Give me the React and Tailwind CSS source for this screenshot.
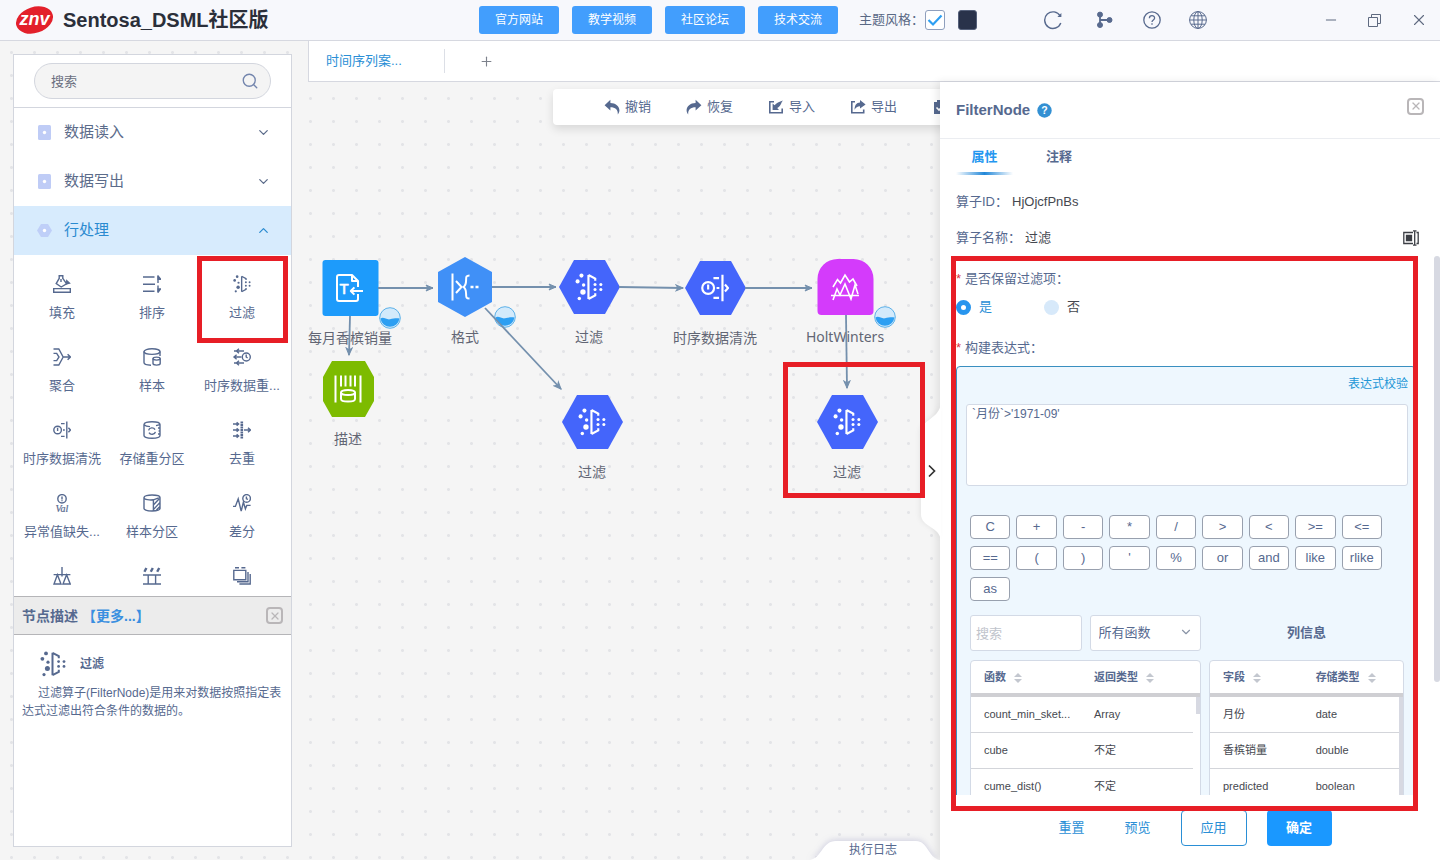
import React from 'react'
import { Minus, X, ChevronDown, ChevronUp, Plus, Search } from 'lucide-react'

const FilterIcon = ({ className }) => (
    <svg className={className} viewBox="0 0 26 26" fill="none" stroke="currentColor" strokeWidth="2">
        <path d="M12.5 1.8v22.4M12.5 1.8l6.3 3.4v2M12.5 24.2l6.3-3.4v-2" />
        <g fill="currentColor" stroke="none">
            <circle cx="6" cy="2.4" r="1.9" />
            <circle cx="2.4" cy="7.8" r="1.9" />
            <circle cx="8" cy="11.2" r="1.6" />
            <circle cx="7.4" cy="17.6" r="2.5" />
            <circle cx="4" cy="23.6" r="1.6" />
            <circle cx="18.6" cy="10.6" r="1.4" />
            <circle cx="18.6" cy="15.4" r="1.4" />
            <circle cx="24" cy="10.6" r="1.4" />
            <circle cx="24" cy="15.4" r="1.4" />
        </g>
    </svg>
)

// 18x18 line icons of the operator list
const Line = ({ children, className = 'size-[18px]' }) => (
    <svg className={className} viewBox="0 0 18 18" fill="none" stroke="currentColor" strokeWidth="1.4">
        {children}
    </svg>
)

const FillIcon = () => (
    <Line>
        <path d="M.7 13.6h16.6v3.7H.7zM6.2 4V.8h3.6V4M6.2 3.4L3.2 8.6l5 3.4 5.4-3.2-3.8-5.4" />
        <path d="M8 4v3M13.6 8.8l2.8-.6-2.6-2.4z" fill="currentColor" />
    </Line>
)

const SortIcon = () => (
    <Line>
        <path d="M0 2h11.5M0 9.2h12M0 16.3h11.5M15 1v7M15 10.5V17" />
        <path d="M15.2 1.2l2.4 3h-2.4zM15.2 17l2.4-3h-2.4z" fill="currentColor" />
    </Line>
)

const MergeIcon = () => (
    <Line>
        <path d="M.5 1h5.3l4.4 8h7.3M.5 5.4h3.2L6 9l-2.3 3.6H.5M.5 17h5.3l4.4-8M14.6 6.2L17.4 9l-2.8 2.8" />
    </Line>
)

const SampleIcon = () => (
    <Line>
        <ellipse cx="9" cy="3.6" rx="8" ry="2.8" />
        <path d="M1 3.6v11C1 16 4 17.2 8 17.2M17 3.6V8" />
        <ellipse cx="13.6" cy="10.6" rx="3.6" ry="1.5" />
        <path d="M10 10.6v5c0 2 7.2 2 7.2 0v-5" />
    </Line>
)

const ResampleIcon = () => (
    <Line>
        <circle cx="13.3" cy="9" r="4" />
        <path d="M13.2 6.5V9l1.4 1M1 3h10M.5 9h8M1 15h10M6 .8L3.4 3 6 5.2M3.6 6.8L1 9l2.6 2.2M6 12.8L3.4 15 6 17.2" />
    </Line>
)

const CleanIcon = ({ className }) => (
    <Line className={className}>
        <circle cx="4.6" cy="9" r="3.8" />
        <path d="M4.6 6.8V10M13.8.5v17M8 2.6h3.6M8 15.4h3.6M10 9h1.8M15.4 6.8L17.4 9l-2 2.2" />
    </Line>
)

const RepartitionIcon = () => (
    <Line>
        <path d="M1 3.4C1-.2 17-.2 17 3.4v11.2c0 3.6-16 3.6-16 0zM1 3.6c1.4 1.6 3.6 2 6 2M13 4.6l4-1M15 7h1.8M15.6 10H17M15 13h1.8" />
        <path d="M5.6 9.4c.6-3 5-3.4 6.4-.8M12.4 10.8c-.6 3-5 3.4-6.4.8" />
    </Line>
)

const DistinctIcon = () => (
    <Line>
        <path d="M0 3h5.4M0 9h5.4M0 15h5.4M3.6 1.4L5.6 3l-2 1.6M3.6 7.4L5.6 9l-2 1.6M3.6 13.4l2 1.6-2 1.6M11 9h6M15 6.8L17.4 9 15 11.2" />
        <path d="M8.8.4v17.2" strokeWidth="2.6" strokeDasharray="2 .5" />
    </Line>
)

const ValIcon = () => (
    <Line>
        <circle cx="9" cy="4.8" r="4.2" />
        <path d="M9 2.4v3M9 6.2v1" />
        <text x="9" y="17.6" textAnchor="middle" fontSize="10" fontStyle="italic" fontFamily="Liberation Serif, serif" fill="currentColor" strokeWidth=".2">Val</text>
    </Line>
)

const SplitIcon = () => (
    <Line>
        <path d="M1 3.4C1 .2 17 .2 17 3.4v11.2c0 3.2-16 3.2-16 0zM1 3.4c0 2.4 6 2.8 9.4 2.4M10.4 5.8L17 3.4M10.4 5.8V17M10.4 11l5.6-6M10.4 15.6L17 8.4M13.4 16l3.6-3.6" />
    </Line>
)

const DiffIcon = () => (
    <Line>
        <circle cx="13.6" cy="4.4" r="3.8" />
        <path d="M13.4 2.4v2.4l1.6.6M0 12.4h2.4l2.8-7.6 3 12.4 2.2-9 2 6.6 1.4-3.4h3.8" />
    </Line>
)

const BalanceIcon = () => (
    <Line>
        <path d="M9 0v9.4M.6 7.6h16.8M4.4 7.8L1 17h7zM13.6 7.8L10 17h7.2z" />
    </Line>
)

const GroupIcon = () => (
    <Line>
        <path d="M0 8h18M0 17h18M5.2 8v9M12.6 8v9" />
        <path d="M1.4 4.8L3.4 1M7.8 4.8l2-3.8M14.2 4.8l2-3.8" strokeWidth="2.4" />
    </Line>
)

const StackIcon = () => (
    <Line>
        <path d="M.8 3.4h12v9.4H.8zM15 5v9.8H4M17.2 7v10H6.4M2 .8h4M8.4.8h4" />
    </Line>
)

const FileInIcon = ({ className }) => (
    <svg className={className} viewBox="0 0 28 28" fill="none" stroke="currentColor" strokeWidth="2" strokeLinejoin="round">
        <path d="M22 20v5a2 2 0 0 1-2 2H3a2 2 0 0 1-2-2V3a2 2 0 0 1 2-2h13l6 6v6M16 1v6h6" />
        <path d="M27 17H15M18.4 13.4L14.8 17l3.6 3.6" />
        <text x="8" y="20" textAnchor="middle" fontSize="15" fontFamily="Liberation Sans, sans-serif" fill="currentColor" strokeWidth=".6">T</text>
    </svg>
)

const FormatIcon = ({ className }) => (
    <svg className={className} viewBox="0 0 28 28" fill="none" stroke="currentColor" strokeWidth="2">
        <path d="M1.5.5v27M5 8l5.5 6L5 20M18.5 2.5c-3.4 0-3.4 1.4-3.4 4.5 0 4-.6 5.6-2.6 7 2 1.4 2.6 3 2.6 7 0 3.1 0 4.5 3.4 4.5" />
        <path d="M19.5 14h3M24.5 14h3" strokeWidth="2.6" />
    </svg>
)

const DescribeIcon = ({ className }) => (
    <svg className={className} viewBox="0 0 28 28" fill="none" stroke="currentColor" strokeWidth="2">
        <path d="M1.5.5v27M26.5.5v27M7 .5v11M11.5.5v11M16.500.5v11M21 .5v11" />
        <ellipse cx="14" cy="17.5" rx="7" ry="2.6" />
        <path d="M7 17.5V24c0 3.4 14 3.4 14 0v-6.5" />
    </svg>
)

const HoltIcon = ({ className }) => (
    <svg className={className} viewBox="0 0 28 28" fill="none" stroke="currentColor" strokeWidth="1.6">
        <path d="M2 14l4.500-7.500 3 3.500L14 2l4.500 7 3.500-3 4 7" />
        <path d="M2 27l4-11 3 6 5-11 6 15 4-14 3 9M0 22.500h28" />
    </svg>
)

const UndoIcon = ({ flip }) => (
    <svg className={flip ? 'size-4 -scale-x-100' : 'size-4'} viewBox="0 0 16 16" fill="currentColor">
        <path d="M6.4.8v3.1c5.2 0 9 3.4 9 7.4 0 1.6-.6 3-1.6 4.2.4-4.800-2.600-7.200-7.400-7.200v3.300L.6 6.200z" />
    </svg>
)

const ImportIcon = () => (
    <svg className="size-4" viewBox="0 0 16 16" fill="currentColor">
        <path d="M6 2H1v12.500h14V9.600h-1.600v3.300H2.600V3.600H6z" />
        <path d="M4.600 11V4.600l2 1.700C8.400 3.800 11 2.600 15 1.400c-1 .9-1.400 2-1.800 3.200-1 2.400-2.200 3.600-4 4.300l1.800 2z" />
    </svg>
)

const ExportIcon = () => (
    <svg className="size-4" viewBox="0 0 16 16" fill="currentColor">
        <path d="M5 2H1v12.500h13.500v-4h-1.600v2.400H2.600V3.600H5z" />
        <path d="M10 1l5.600 4.400L10 9.600V7.200c-2.600 0-4.200 1.200-5.400 3.600 0-4.400 1.800-7 5.400-7.200z" />
    </svg>
)

const ClipIcon = () => (
    <svg className="size-4" viewBox="0 0 16 16" fill="currentColor">
        <path d="M2 3h3V1h6v2h3v12H2z" />
        <path d="M4.500 8.500L7 11l4.500-4.500" fill="none" stroke="#fff" strokeWidth="1.600" />
    </svg>
)

const CloseBox = ({ label }) => (
    <button type="button" aria-label={label} className="flex size-[17px] items-center justify-center rounded border-2 border-[#b9b6b8] text-[#b9b6b8]">
        <X size={12} strokeWidth={2.5} />
    </button>
)

const SortArrows = () => (
    <svg className="ml-2 inline-block h-3 w-2 align-middle" viewBox="0 0 8 12" fill="#c3c7cf">
        <path d="M4 1l4 4H0zM4 11L0 7h8z" />
    </svg>
)

const links = ['官方网站', '教学视频', '社区论坛', '技术交流']

const operators = [
    { name: '填充', icon: <FillIcon /> },
    { name: '排序', icon: <SortIcon /> },
    { name: '过滤', icon: <FilterIcon className="size-[18px]" />, marked: true },
    { name: '聚合', icon: <MergeIcon /> },
    { name: '样本', icon: <SampleIcon /> },
    { name: '时序数据重...', icon: <ResampleIcon /> },
    { name: '时序数据清洗', icon: <CleanIcon /> },
    { name: '存储重分区', icon: <RepartitionIcon /> },
    { name: '去重', icon: <DistinctIcon /> },
    { name: '异常值缺失...', icon: <ValIcon /> },
    { name: '样本分区', icon: <SplitIcon /> },
    { name: '差分', icon: <DiffIcon /> },
    { icon: <BalanceIcon /> },
    { icon: <GroupIcon /> },
    { icon: <StackIcon /> },
]

const tools = [
    { name: '撤销', icon: <UndoIcon /> },
    { name: '恢复', icon: <UndoIcon flip /> },
    { name: '导入', icon: <ImportIcon /> },
    { name: '导出', icon: <ExportIcon /> },
    { icon: <ClipIcon /> },
]

const keys = ['C', '+', '-', '*', '/', '>', '<', '>=', '<=', '==', '(', ')', "'", '%', 'or', 'and', 'like', 'rlike', 'as']

// node centres on the canvas
const HEX = '0,30 15,3 46,3 61,30 46,57 15,57'
const nodes = [
    { x: 42, y: 206, name: '每月香槟销量', fill: '#1d9bfb', rect: true, icon: <FileInIcon className="size-7" />, status: true },
    { x: 157, y: 205, name: '格式', fill: '#4090f7', points: '30,0 57,15 57,45 30,60 3,45 3,15', icon: <FormatIcon className="size-7" />, status: true },
    { x: 281, y: 205, name: '过滤', fill: '#4465fb', points: HEX, icon: <FilterIcon className="size-7" /> },
    { x: 407, y: 206, name: '时序数据清洗', fill: '#4465fb', points: HEX, icon: <CleanIcon className="size-7" /> },
    { x: 537, y: 205, name: 'HoltWinters', fill: '#d43bfb', arch: true, icon: <HoltIcon className="size-7" />, status: true },
    { x: 40, y: 307, name: '描述', fill: '#7dbb00', points: '14,2 47,2 56,18 56,42 47,58 14,58 5,42 5,18', icon: <DescribeIcon className="size-7" /> },
    { x: 284, y: 340, name: '过滤', fill: '#4465fb', points: HEX, icon: <FilterIcon className="size-7" /> },
    { x: 539, y: 340, name: '过滤', fill: '#4465fb', points: HEX, icon: <FilterIcon className="size-7" /> },
]

const edges = [
    [70, 206, 125, 206],
    [184, 205, 248, 205],
    [311, 205, 375, 206],
    [437, 206, 504, 206],
    [42, 234, 41, 273],
    [177, 226, 253, 307],
    [538, 233, 539, 306],
]

const Node = ({ node }) => (
    <div className="absolute flex w-28 -translate-x-1/2 flex-col items-center" style={{ left: node.x, top: node.y - 30 }}>
        <div className="relative flex h-[60px] w-[61px] items-center justify-center">
            <svg className="absolute inset-0" width="61" height="60" fill={node.fill}>
                {node.rect && <rect x="2.5" y="2" width="56" height="56" rx="3" />}
                {node.arch && <path d="M2.5 22a20 20 0 0 1 20-20h16a20 20 0 0 1 20 20v32a4 4 0 0 1-4 4h-48a4 4 0 0 1-4-4z" />}
                {node.points && <polygon points={node.points} />}
            </svg>
            <div className="relative text-white">{node.icon}</div>
            {node.status && (
                <svg className="absolute top-[49px] left-[59px] size-[22px]" viewBox="0 0 22 22">
                    <circle cx="11" cy="11" r="10.3" fill="#d3eafb" stroke="#5db1e8" />
                    <path d="M1.5 11.5c3-2 6 1.5 9.5.8s6-1.3 9.500-.8A9.600 9.600 0 0 1 1.500 11.500z" fill="#2d9ff2" />
                </svg>
            )}
        </div>
        <span className="mt-2.5 font-['Noto_Sans','Noto_Sans_CJK_SC',sans-serif] text-sm whitespace-nowrap text-[#626674]">{node.name}</span>
    </div>
)

const Header = () => (
    <header className="flex h-[41px] shrink-0 items-center border-b border-[#d6d8e0] bg-[#f7f8fc]">
        <div className="flex w-[479px] shrink-0 items-center pl-[15px]">
            <svg className="h-[30px] w-[39px]" viewBox="0 0 39 30">
                <ellipse cx="19.5" cy="15" rx="19" ry="13" fill="#e3202b" transform="rotate(-18 19.5 15)" />
                <text x="19.5" y="20" textAnchor="middle" fontSize="18" fontWeight="bold" fontStyle="italic" fontFamily="Liberation Sans, sans-serif" fill="#fff">znv</text>
            </svg>
            <h1 className="ml-[9px] text-xl leading-7 font-bold text-[#2b2f3a]">Sentosa_DSML社区版</h1>
        </div>
        <nav className="flex gap-[13px]">
            {links.map((l) => (
                <a key={l} href="#" className="flex h-7 w-20 items-center justify-center rounded-[3px] bg-[#429efd] text-xs text-white">{l}</a>
            ))}
        </nav>
        <div className="ml-[21px] flex items-center">
            <label htmlFor="theme" className="text-[13px] text-[#5a6985]">主题风格：</label>
            <span className="relative ml-px flex size-5">
                <input id="theme" type="checkbox" defaultChecked className="size-5 appearance-none rounded-[3px] border border-[#8f9fbd] bg-white" />
                <svg className="pointer-events-none absolute inset-0 size-5" viewBox="0 0 20 20" fill="none" stroke="#2d9ff2" strokeWidth="2.2">
                    <path d="M3.5 10l4.500 4.500 8.500-9" />
                </svg>
            </span>
            <button type="button" aria-label="深色主题" className="ml-[13px] h-5 w-[19px] rounded-[3px] border border-[#55607a] bg-[#29324a]" />
        </div>
        <div className="ml-[66px] flex items-center gap-7 text-[#586a8e]">
            <button type="button" aria-label="刷新">
                <svg className="size-5" viewBox="0 0 20 20" fill="none" stroke="currentColor" strokeWidth="1.4">
                    <path d="M17.8 13a8.300 8.300 0 1 1-.6-7" />
                    <path d="M18.400 3v4h-4z" fill="currentColor" stroke="none" />
                </svg>
            </button>
            <button type="button" aria-label="流程">
                <svg className="ml-1 size-5" viewBox="0 0 20 20" fill="currentColor" stroke="currentColor">
                    <path d="M5 5v11M5 10h10" fill="none" strokeWidth="1.8" />
                    <circle cx="5" cy="4.6" r="2.500" />
                    <circle cx="5" cy="15" r="2.500" />
                    <circle cx="14.500" cy="10" r="2.500" />
                </svg>
            </button>
            <button type="button" aria-label="帮助">
                <svg className="size-[18px]" viewBox="0 0 18 18" fill="none" stroke="currentColor" strokeWidth="1.3">
                    <circle cx="9" cy="9" r="8.2" />
                    <path d="M6.400 7.200c0-3.400 5.200-3.400 5.200-.2 0 1.800-2.600 2-2.600 4M9 12.200v1.500" />
                </svg>
            </button>
            <button type="button" aria-label="语言">
                <svg className="size-[18px]" viewBox="0 0 18 18" fill="none" stroke="currentColor">
                    <circle cx="9" cy="9" r="8.4" />
                    <ellipse cx="9" cy="9" rx="4.200" ry="8.400" />
                    <path d="M9 .6v16.800M.6 9h16.800M2 4.800h14M2 13.200h14" />
                </svg>
            </button>
        </div>
        <div className="ml-auto flex items-center gap-[29px] pr-3 text-[#5f6a80]">
            <button type="button" aria-label="最小化"><Minus size={16} strokeWidth={1.5} /></button>
            <button type="button" aria-label="还原">
                <svg className="size-[13px]" viewBox="0 0 13 13" fill="none" stroke="currentColor">
                    <path d="M.5 3.500h9v9h-9zM3.500 3.500v-3h9v9h-3" />
                </svg>
            </button>
            <button type="button" aria-label="关闭"><X size={18} strokeWidth={1.5} /></button>
        </div>
    </header>
)

const Group = ({ name, open }) => (
    <button
        type="button"
        className={
            open
                ? 'flex h-[49px] w-full shrink-0 items-center bg-[#d7ebfd] pr-5 pl-[23px] text-[#2a8ad0]'
                : 'flex h-[49px] w-full shrink-0 items-center bg-white pr-5 pl-[23px] text-[#5b6b8a]'
        }
    >
        <svg className="size-[15px]" viewBox="0 0 15 15">
            {open ? <path d="M4 1h7l4 6.500-4 6.500H4L0 7.500z" fill="#bfcff8" /> : <rect x="1" width="13" height="15" rx="1.5" fill="#bfccf6" />}
            <circle cx="7.5" cy="7.5" r="1.7" fill="#fff" />
        </svg>
        <span className="ml-3 text-[15px]">{name}</span>
        {open ? <ChevronUp className="ml-auto" size={15} strokeWidth={2} /> : <ChevronDown className="ml-auto" size={15} strokeWidth={2} />}
    </button>
)

const Sidebar = () => (
    <aside className="my-[13px] ml-[13px] flex w-[279px] shrink-0 flex-col border border-[#d3d6de] bg-white">
        <div className="relative flex h-[53px] shrink-0 items-center border-b border-[#d3d6de] px-5">
            <label htmlFor="op-search" className="sr-only">搜索</label>
            <input id="op-search" placeholder="搜索" className="h-9 w-full rounded-full border border-[#d3d6de] bg-[#f4f4f4] px-4 text-[13px] placeholder:text-[#6b6f80]" />
            <Search className="absolute right-8 text-[#7385ad]" size={18} strokeWidth={1.8} />
        </div>
        <Group name="数据读入" />
        <Group name="数据写出" />
        <Group name="行处理" open />
        <div className="grid min-h-0 flex-1 grid-cols-3 content-start overflow-hidden pr-1 pl-[3px]">
            {operators.map((op, i) => (
                <button key={i} type="button" className="relative flex h-[73px] flex-col items-center pt-5 text-[#56698f]">
                    {op.icon}
                    {op.name && <span className="mt-2.5 text-[13px] leading-5 whitespace-nowrap">{op.name}</span>}
                    {op.marked && <span className="absolute top-px left-0 z-10 h-[87px] w-[91px] border-[5px] border-[#e71e26]" />}
                </button>
            ))}
        </div>
        <section className="flex h-[250px] shrink-0 flex-col">
            <div className="flex h-[39px] shrink-0 items-center border-y border-[#b5b5b8] bg-[#ececec] px-2 text-sm font-bold text-[#56698f]">
                <h2>节点描述</h2>
                <a href="#" className="ml-1 text-[#3a8fe0]">【更多...】</a>
                <span className="ml-auto"><CloseBox label="关闭描述" /></span>
            </div>
            <div className="flex items-center pt-4 pl-[26px] text-[#56698f]">
                <FilterIcon className="size-[26px]" />
                <strong className="ml-3.5 text-xs">过滤</strong>
            </div>
            <p className="mt-[7px] px-2 indent-4 text-xs leading-[18px] text-[#56698f]">
                过滤算子(FilterNode)是用来对数据按照指定表达式过滤出符合条件的数据的。
            </p>
        </section>
    </aside>
)

const Canvas = () => (
    <main className="relative min-w-0 flex-1 overflow-hidden">
        {nodes.map((n, i) => (
            <Node key={i} node={n} />
        ))}
        <svg className="pointer-events-none absolute inset-0 size-full" stroke="#7490ad" strokeWidth="1.8" fill="none">
            <defs>
                <marker id="arrow" markerUnits="userSpaceOnUse" markerWidth="10" markerHeight="8" refX="8" refY="4" orient="auto">
                    <path d="M1 1l7 3-7 3 2-3z" fill="#7490ad" stroke="#7490ad" strokeWidth="1" />
                </marker>
            </defs>
            {edges.map(([x1, y1, x2, y2], i) => (
                <line key={i} x1={x1} y1={y1} x2={x2} y2={y2} markerEnd="url(#arrow)" />
            ))}
        </svg>

        {/* toolbar */}
        <div className="absolute top-[7px] left-[245px] flex h-9 items-center gap-[35px] rounded bg-white pr-14 pl-[51px] text-[13px] text-[#56698f] shadow-[0_4px_10px_rgba(0,0,0,0.12)]">
            {tools.map((t, i) => (
                <button key={i} type="button" className="flex shrink-0 items-center gap-[5px] whitespace-nowrap">
                    {t.icon}
                    {t.name}
                </button>
            ))}
        </div>

        <div className="pointer-events-none absolute top-[280px] left-[475px] z-10 h-[136px] w-[142px] border-[5px] border-[#e71e26]" />

        {/* log drawer handle */}
        <button type="button" className="absolute right-0 bottom-0 flex h-5 w-[134px] items-center justify-center text-xs text-[#56698f]">
            <svg className="absolute inset-0 drop-shadow-[0_-1px_3px_rgba(90,90,160,0.25)]" width="134" height="20" viewBox="0 0 134 20">
                <path d="M4 20C16 18 16 1 30 1h80c12 0 12 17 24 19z" fill="#fff" />
            </svg>
            <span className="relative">执行日志</span>
        </button>
    </main>
)

const DataTable = ({ head, rows, bar }) => (
    <div className="relative overflow-hidden rounded-t border border-[#d3dae6] bg-white">
        <table className="w-full table-fixed border-separate border-spacing-0 text-left text-[11px]">
            <thead>
                <tr>
                    {head.map((h) => (
                        <th key={h} className="h-9 border-b-4 border-[#cfcfd3] pl-[13px] font-bold whitespace-nowrap text-[#56698f] first:w-[48%]">
                            {h}
                            <SortArrows />
                        </th>
                    ))}
                </tr>
            </thead>
            <tbody>
                {rows.map((r) => (
                    <tr key={r[0]}>
                        {r.map((c) => (
                            <td key={c} className="h-9 border-b border-[#d3d5da] pl-[13px] whitespace-nowrap text-[#45484f]">{c}</td>
                        ))}
                    </tr>
                ))}
            </tbody>
        </table>
        <div className={bar === 'full' ? 'absolute top-9 right-0 bottom-0 w-1 bg-[#d7d9e2]' : 'absolute top-9 right-0 bottom-0 flex w-[7px] justify-end bg-white'}>
            {bar !== 'full' && <div className="h-[17px] w-1 bg-[#d7d9e2]" />}
        </div>
    </div>
)

const Panel = () => (
    <section className="relative flex w-[500px] shrink-0 flex-col bg-white text-[13px] text-[#56698f] shadow-[-3px_0_8px_rgba(0,0,0,0.09)]">
        {/* collapse handle */}
        <button type="button" aria-label="收起面板" className="absolute top-[316px] -left-5 h-[144px] w-5">
            <svg className="drop-shadow-[-2px_0_2px_rgba(0,0,0,0.05)]" width="21" height="144" viewBox="0 0 21 144">
                <path d="M21 4C20 22 1 20 1 36v80c0 14 20 12 20 28z" fill="#fff" />
                <path d="M9 67.5l5.5 5.5L9 78.5" fill="none" stroke="#333" strokeWidth="1.7" />
            </svg>
        </button>

        <div className="flex h-[57px] shrink-0 items-center border-b border-[#ebedf1] px-4">
            <h2 className="text-[15px] font-bold">FilterNode</h2>
            <svg className="ml-[7px] size-[15px]" viewBox="0 0 15 15">
                <circle cx="7.5" cy="7.5" r="7.2" fill="#3390d3" />
                <text x="7.5" y="11.2" textAnchor="middle" fontSize="10.5" fontWeight="bold" fontFamily="Liberation Sans, sans-serif" fill="#fff">?</text>
            </svg>
            <span className="mb-2 ml-auto"><CloseBox label="关闭" /></span>
        </div>

        <div className="flex h-[45px] shrink-0 gap-5 px-4 font-bold">
            <button type="button" className="flex h-9 w-[57px] flex-col items-center justify-between pt-2 text-[#2497f0]">
                <span className="leading-5">属性</span>
                <span className="h-[3px] w-full bg-linear-to-r from-transparent via-[#2187d8] to-transparent" />
            </button>
            <button type="button" className="flex h-9 w-[52px] justify-center pt-2 leading-5">注释</button>
        </div>
        <div className="flex h-9 shrink-0 items-center px-4">
            算子ID：<span className="ml-1 text-[#45484f]">HjOjcfPnBs</span>
        </div>
        <div className="flex h-9 shrink-0 items-center pr-[21px] pl-4">
            算子名称：<span className="ml-1 text-[#45484f]">过滤</span>
            <button type="button" aria-label="重命名" className="ml-auto">
                <svg className="size-4" viewBox="0 0 16 16" fill="none" stroke="#3c3f45" strokeWidth="1.3">
                    <path d="M10 2.5H.8v11H10M13.5 2.5h1.7v11h-1.7M10 .8h3.5M10 15.2h3.5M11.7.8v14.4" />
                    <path d="M3.5 5.5h5v5h-5z" fill="#3c3f45" />
                </svg>
            </button>
        </div>

        <div className="relative min-h-0 flex-1 overflow-hidden pt-3 pr-6 pl-4">
            <fieldset>
                <legend className="leading-[22px]"><span className="mr-1 text-[#d9363e]">*</span>是否保留过滤项：</legend>
                <div className="mt-1.5 flex h-[22px] items-center">
                    <input id="keep-yes" name="keep" type="radio" defaultChecked className="size-[15px] appearance-none rounded-full bg-[#d7e9fa] checked:border-[5px] checked:border-[#2795ee] checked:bg-white" />
                    <label htmlFor="keep-yes" className="ml-2 text-[#2a8fd6]">是</label>
                    <input id="keep-no" name="keep" type="radio" className="ml-[52px] size-[15px] appearance-none rounded-full bg-[#d7e9fa] checked:border-[5px] checked:border-[#2795ee] checked:bg-white" />
                    <label htmlFor="keep-no" className="ml-2 text-[#45484f]">否</label>
                </div>
            </fieldset>
            <label htmlFor="expr" className="mt-[19px] block leading-[22px]"><span className="mr-1 text-[#d9363e]">*</span>构建表达式：</label>

            <div className="mt-[7px] rounded border border-[#3a8fc0] bg-[#eef7fe] pt-2 pr-[7px] pb-6 pl-[9px]">
                <div className="flex justify-end">
                    <a href="#" className="text-xs leading-[18px] text-[#2196d6]">表达式校验</a>
                </div>
                <textarea id="expr" defaultValue="`月份`>'1971-09'" className="mt-[11px] block h-[82px] w-full resize-none rounded-[3px] border border-[#d3dae6] bg-white px-[5px] text-xs leading-[18px]" />
                <div className="mt-[29px] mr-[26px] ml-1 grid grid-cols-9 gap-x-1.5 gap-y-[7px]">
                    {keys.map((k) => (
                        <button key={k} type="button" className="h-6 rounded border border-[#98a0ae] bg-white">{k}</button>
                    ))}
                </div>
                <div className="mt-3.5 mr-1 ml-1 grid grid-cols-[231fr_195fr] gap-x-2 gap-y-[9px]">
                    <div className="grid grid-cols-2 gap-2">
                        <label htmlFor="fn-search" className="sr-only">搜索函数</label>
                        <input id="fn-search" placeholder="搜索" className="h-9 w-full min-w-0 rounded-[3px] border border-[#d3dae6] bg-white px-[5px] placeholder:text-[#bfc4cc]" />
                        <div className="relative">
                            <label htmlFor="fn-type" className="sr-only">函数类型</label>
                            <select id="fn-type" className="h-9 w-full appearance-none rounded-[3px] border border-[#d3dae6] bg-white px-2">
                                <option>所有函数</option>
                            </select>
                            <ChevronDown className="pointer-events-none absolute top-2.5 right-2 text-[#8a94a6]" size={14} />
                        </div>
                    </div>
                    <h3 className="flex items-center justify-center font-bold">列信息</h3>
                    <DataTable
                        head={['函数', '返回类型']}
                        rows={[['count_min_sket...', 'Array'], ['cube', '不定'], ['cume_dist()', '不定']]}
                    />
                    <DataTable
                        bar="full"
                        head={['字段', '存储类型']}
                        rows={[['月份', 'date'], ['香槟销量', 'double'], ['predicted', 'boolean']]}
                    />
                </div>
            </div>
            <div className="absolute top-0 right-0 h-[79%] w-1.5 rounded-full bg-[#d7d9e2]" />
        </div>

        <div className="flex h-[65px] shrink-0 justify-center pt-[15px] pr-2.5 text-[#2a8fd6]">
            <button type="button" className="h-9 w-[66px]">重置</button>
            <button type="button" className="h-9 w-[66px]">预览</button>
            <button type="button" className="ml-2.5 h-9 w-[66px] rounded border border-[#2a8fd6]">应用</button>
            <button type="button" className="ml-5 h-9 w-[65px] rounded bg-[#1a98ff] font-bold text-white">确定</button>
        </div>

        <div className="pointer-events-none absolute top-[174px] right-[22px] bottom-[49px] left-[11px] border-[5px] border-[#e71e26]" />
    </section>
)

const App = () => {
    return (
        <div className="flex h-screen flex-col overflow-hidden bg-[#f5f5f5] font-['Liberation_Sans','Noto_Sans_CJK_SC',sans-serif]">
            <Header />
            <div className="flex min-h-0 flex-1 gap-4 bg-[radial-gradient(circle,#e3e4e7_1px,transparent_2px)] bg-size-[23px_23px]">
                <Sidebar />
                <div className="flex min-w-0 flex-1 flex-col">
                    <div className="flex h-[41px] shrink-0 items-center border-b border-l border-[#d6d8e0] bg-white text-[13px]">
                        <a href="#" className="w-[136px] border-r border-[#dcdfe6] pl-[17px] leading-6 text-[#2a8fd6]">时间序列案...</a>
                        <button type="button" aria-label="新建" className="ml-[34px] text-[#7d828c]"><Plus size={15} strokeWidth={1.8} /></button>
                    </div>
                    <div className="flex min-h-0 flex-1">
                        <Canvas />
                        <Panel />
                    </div>
                </div>
            </div>
        </div>
    )
}

export default App
